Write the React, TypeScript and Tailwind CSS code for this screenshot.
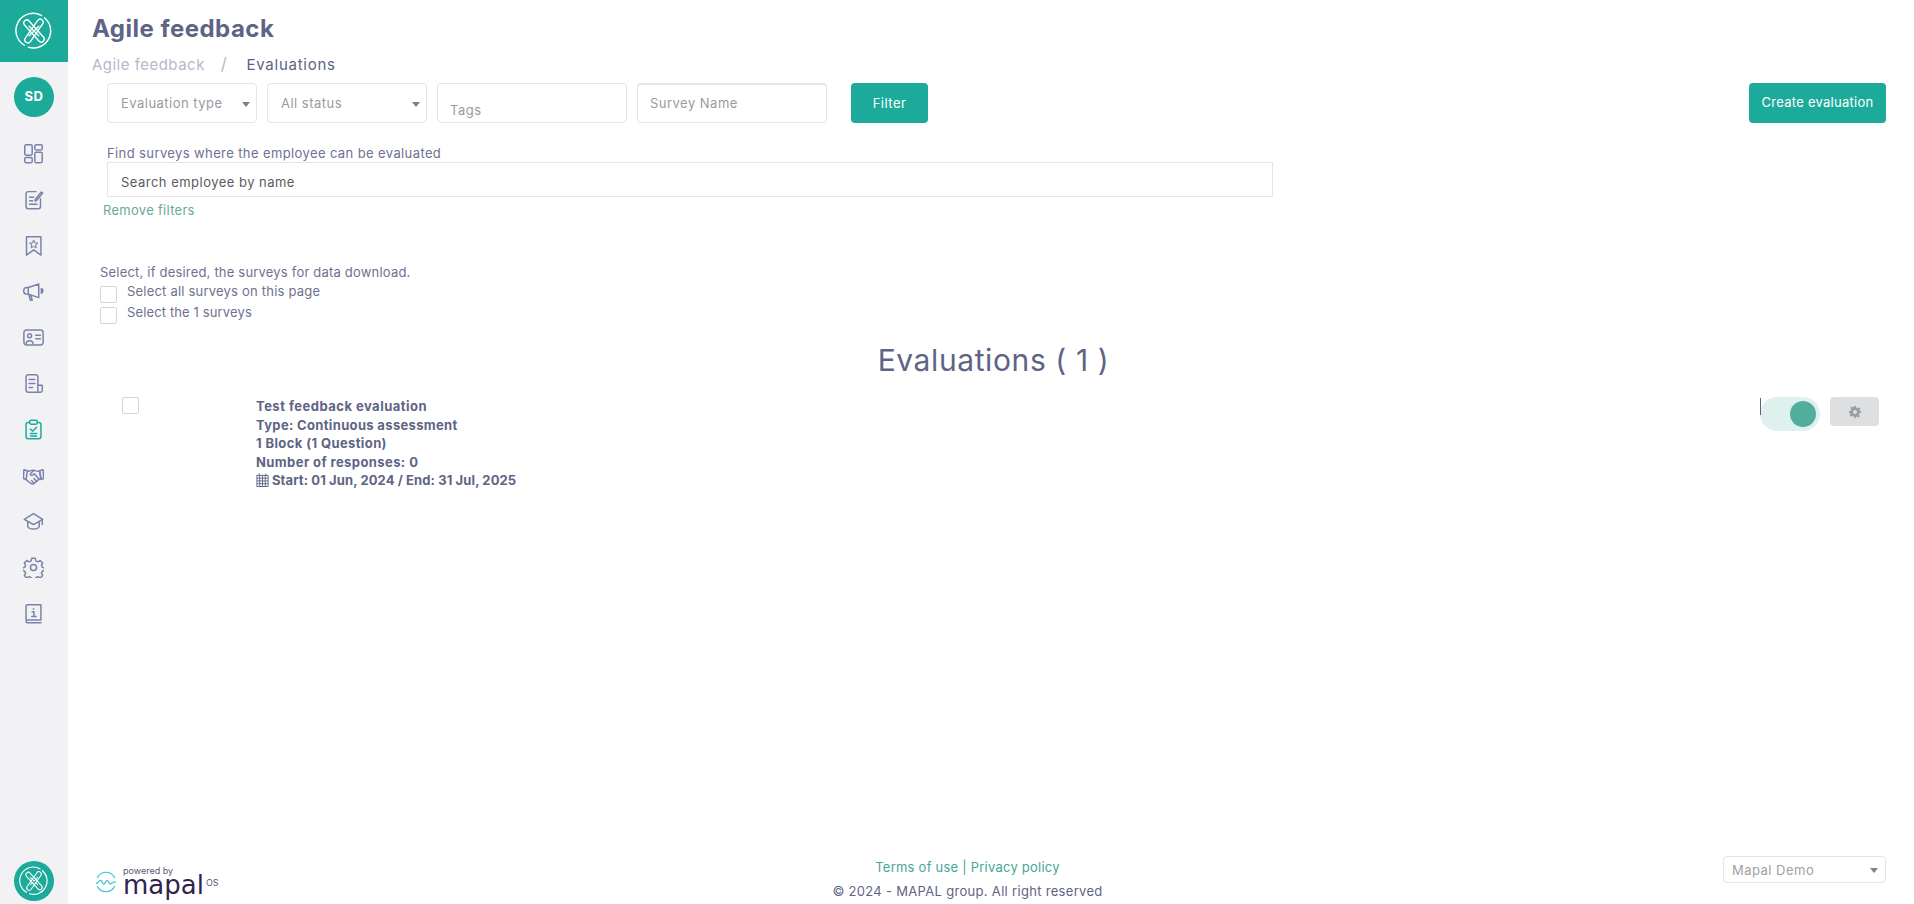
import React from "react";

const Logo = ({ size, stroke = "#ffffff" }: { size: number; stroke?: string }) => (
  <svg width={size} height={size} viewBox="0 0 40 40" fill="none" stroke={stroke} strokeWidth="1.500" strokeLinecap="round">
    <path d="M10 35A18 18 0 0 1 28 3.800" />
    <path d="M31 6A18 18 0 0 1 14 37" />
    <g strokeWidth="1.400">
      <rect x="16.800" y="5.500" width="6.400" height="29" rx="3.200" transform="rotate(35 20 20)" />
      <rect x="16.800" y="5.500" width="6.400" height="29" rx="3.200" transform="rotate(-42 20 20)" />
      <path d="M15 15l10 10M15 25l10-10" />
    </g>
  </svg>
);

const I = ({ children, color = "#7a82aa" }: { children: React.ReactNode; color?: string }) => (
  <svg width="21" height="21" viewBox="0 0 24 24" fill="none" stroke={color} strokeWidth="1.700" strokeLinecap="round" strokeLinejoin="round">
    {children}
  </svg>
);

const icons: React.ReactNode[] = [
  <I key="a"><rect x="2" y="2" width="8.500" height="12" rx="1.600" /><rect x="13.500" y="2" width="8.500" height="6" rx="1.600" /><rect x="2" y="16.500" width="8.500" height="6" rx="1.600" /><rect x="13.500" y="10.500" width="8.500" height="12" rx="1.600" /></I>,
  <I key="b"><path d="M15 3H6a2.500 2.500 0 0 0-2.500 2.500V20A2.500 2.500 0 0 0 6 22.500h11.500A2.500 2.500 0 0 0 20 20V11" /><path d="M14 12l7-8.500 1.500 1.200L15.500 13.200 13.800 13.800z" /><path d="M7.500 9.500H12M7.500 13.500H11M7.500 17.500H16" /></I>,
  <I key="c"><path d="M4 2h16.500v21l-8.250-6L4 23z" /><path d="M12.250 6l1.400 2.900 3.100.4-2.300 2.100.6 3.100-2.800-1.500-2.800 1.500.6-3.100-2.300-2.100 3.100-.4z" strokeWidth="1.200" /></I>,
  <I key="d"><path d="M18 3.500v15.500l-12-4H4.500a3.500 3.500 0 0 1 0-7.500H6z" /><path d="M6.500 15l2 7h2L9 16" /><path d="M21 8.500a3 3 0 0 1 0 5.500z" fill="#7a82aa" /><path d="M6 7.500V15" /></I>,
  <I key="e"><rect x="1" y="3.500" width="22" height="17" rx="3" /><circle cx="7.500" cy="10" r="2.300" /><path d="M3.500 19.500c0-2.500 1.500-3.800 4-3.800s4 1.300 4 3.800" /><path d="M14.500 9.500H20M14.500 13.500H20" /></I>,
  <I key="f"><path d="M17 14V4.500A2.500 2.500 0 0 0 14.500 2H6a2.500 2.500 0 0 0-2.500 2.500V19.500A2.500 2.500 0 0 0 6 22h14a2 2 0 0 0 2-2v-6z" /><path d="M17 14v8" /><path d="M7 7.500h6.500M7 12h6.500M7 16.500h4" /></I>,
  <I key="g" color="#1cab9b"><path d="M7.500 4H6a2.500 2.500 0 0 0-2.500 2.500V20A2.500 2.500 0 0 0 6 22.500h12a2.500 2.500 0 0 0 2.500-2.500V6.500A2.500 2.500 0 0 0 18 4h-1.500" /><rect x="7.500" y="1.500" width="9" height="4.500" rx="2" /><path d="M8.500 11.500l2.500 2.500 4.500-4.500" /><path d="M8.500 16.500h7M8.500 19.500h7" /></I>,
  <I key="h"><path d="M1 5.500l4 1-1.500 10-3-1zM23 5.500l-4 1 1.500 10 3-1z" /><path d="M5 7c3 .5 4.500-1.500 7-1 2 .4 4.500 1.700 7 1l1.500 8.500-3 1.500-5.500 4.500c-1.500 1-3-.5-4.500-1.500l-4-3.500" /><path d="M12 6.500l-3.500 3.500c-.8 1.500 1.500 2.500 3 1.200l1.500-1.200 5 6M15 18l-2.500-2.500M12 20l-2-2" /></I>,
  <I key="i"><path d="M12 3L1.500 9.500 12 15.500l10.500-6z" /><path d="M5.500 12v6c2 3.500 11 3.500 13 0v-6" /><path d="M22 9.500v6" /></I>,
  <I key="j"><path d="M10 1.500h4l.7 3 2.300 1 2.700-1.500 2.800 2.800-1.500 2.700 1 2.300 2.500.7v3l-2.500.7-1 2.300 1.500 2.700-2.800 2.800-2.700-1.500-2.300 1-.7 3h-4l-.7-3-2.300-1-2.700 1.500-2.800-2.800 1.500-2.700-1-2.300-2.500-.7v-3l2.500-.7 1-2.300-1.500-2.700 2.800-2.800 2.700 1.500 2.300-1z" /><circle cx="12" cy="12" r="3.500" /></I>,
  <I key="k"><path d="M3.500 19.500V3.500A1.500 1.500 0 0 1 5 2h15.500v17.500H5a1.500 1.500 0 0 0-1.500 1.500v0a1.500 1.500 0 0 0 1.500 1.500h15.500" /><path d="M12 6.500v.5M10.500 10H12.500V15M10 15.500h5" /></I>,
];

const Caret = () => <span className="w-0 h-0 border-x-[4.5px] border-x-transparent border-t-[5px] border-t-[#808080]" />;

const Check = ({ cls }: { cls: string }) => <span className={`block w-[17px] h-[17px] shrink-0 border border-[#d4d4d8] rounded-[2px] bg-white ${cls}`} />;

const field = "h-10 border border-[#e4e4ea] rounded-[4px] bg-white text-[13px] text-[#9a9a9f] flex items-center";

export default function App() {
  return (
    <div className="h-[904px] w-[1914px] flex bg-white overflow-hidden tracking-[0.03em]" style={{ fontFamily: "Inter, 'Noto Sans', sans-serif" }}>
      <aside className="w-[68px] shrink-0 bg-[#f2f2f5] flex flex-col items-center">
        <div className="w-full h-[62px] bg-[#1cab9b] flex items-center justify-center">
          <Logo size={38} />
        </div>
        <div className="mt-[15px] w-10 h-10 rounded-full bg-[#1cab9b] text-white font-bold text-[13px] flex items-center justify-center">SD</div>
        <nav className="mt-[26px] pr-[2px] flex flex-col items-center gap-[25px]">
          {icons.map((ic, i) => <div key={i} className="w-[21px] h-[21px]">{ic}</div>)}
        </nav>
        <div className="mt-auto mb-[3px] w-10 h-10 rounded-full bg-[#1cab9b] flex items-center justify-center">
          <Logo size={30} />
        </div>
      </aside>

      <main className="flex-1 min-w-0 flex flex-col">
        <h1 className="ml-[24px] mt-[14px] text-[24px] leading-[30px] font-bold text-[#5e6484]">Agile feedback</h1>
        <div className="ml-[24px] mt-[11px] h-[20px] flex items-center text-[15px]">
          <span className="text-[#b5b8cb]">Agile feedback</span>
          <span className="text-[#b5b8cb] text-[17px] ml-[16px] mr-[19px]">/</span>
          <span className="text-[#5e6484] tracking-[0.05em]">Evaluations</span>
        </div>

        <div className="mt-[8px] ml-[39px] mr-[28px] flex items-start">
          <div className={`${field} w-[150px] pl-[13px] pr-[6px] pt-[2px] justify-between`}><span>Evaluation type</span><Caret /></div>
          <div className={`${field} ml-[10px] w-[160px] pl-[13px] pr-[6px] pt-[2px] justify-between`}><span>All status</span><Caret /></div>
          <div className={`${field} ml-[10px] w-[190px] px-[12px] !items-end pb-[2px] text-[#a09a96]`}>Tags</div>
          <div className={`${field} ml-[10px] w-[190px] px-[12px] border-t-2 pt-[1px]`}>Survey Name</div>
          <button className="ml-[24px] w-[77px] h-10 rounded-[4px] bg-[#1cab9b] text-white text-[13px] pt-[1px]">Filter</button>
          <button className="ml-auto w-[137px] h-10 rounded-[4px] bg-[#1cab9b] text-white text-[13px] tracking-[0.02em]">Create evaluation</button>
        </div>

        <div className="ml-[39px] mt-[21px] text-[13px] leading-[18px] text-[#6d7190] tracking-[0.03em]">Find surveys where the employee can be evaluated</div>
        <div className="ml-[39px] w-[1166px] h-[35px] border border-[#e4e4ea] px-[13px] pt-[6px] flex items-center text-[13px] text-[#5b5b60]">Search employee by name</div>
        <div className="ml-[35px] mt-[4px] text-[13px] leading-[18px] text-[#6aa99b] tracking-[0.022em]">Remove filters</div>

        <div className="ml-[32px] mt-[44px] text-[13px] leading-[18px] text-[#6d7190] tracking-[0.015em]">Select, if desired, the surveys for data download.</div>
        <div className="ml-[32px] mt-[1px] flex items-start h-[21px]"><Check cls="mt-[4px]" /><span className="ml-[10px] text-[13px] leading-[18px] text-[#6d7190] tracking-[0.016em]">Select all surveys on this page</span></div>
        <div className="ml-[32px] flex items-start h-[21px]"><Check cls="mt-[4px]" /><span className="ml-[10px] text-[13px] leading-[18px] text-[#6d7190] tracking-[0.01em]">Select the 1 surveys</span></div>

        <h2 className="mt-[16px] text-center text-[30px] leading-[40px] font-normal text-[#5e6484] pl-[5px] tracking-[0.02em]">Evaluations ( 1 )</h2>

        <div className="mt-[17px] flex items-start">
          <Check cls="ml-[54px]" />
          <div className="ml-[117px] text-[13px] leading-[18.5px] font-bold text-[#5e6484]">
            <div>Test feedback evaluation</div>
            <div className="tracking-[0.026em]">Type: Continuous assessment</div>
            <div className="tracking-[0.03em]">1 Block (1 Question)</div>
            <div className="tracking-[0.032em]">Number of responses: 0</div>
            <div className="flex items-center gap-[3px] tracking-[0.008em]">
              <svg width="13" height="14" viewBox="0 0 14 15" fill="none" stroke="#5e6484" strokeWidth="1">
                <rect x="1" y="2.500" width="12" height="12" />
                <path d="M1 5.500h12M1 8.500h12M1 11.500h12M4 2.500v12M7 2.500v12M10 2.500v12M3.500.5v2.500M10.500.5v2.500" />
              </svg>
              <span>Start: 01 Jun, 2024 / End: 31 Jul, 2025</span>
            </div>
          </div>
          <div className="ml-auto mr-[35px] flex items-start">
            <span className="relative z-10 w-px h-[17px] bg-[#5e6484] mt-[1px]" />
            <div className="ml-[-1px] w-[60px] h-[34px] rounded-full bg-[#dff1ee] flex items-center justify-end pr-[4px]">
              <span className="block w-[26px] h-[26px] rounded-full bg-[#52ad9c]" />
            </div>
            <div className="ml-[10px] w-[49px] h-[29px] rounded-[4px] bg-[#dedfe1] flex items-center justify-center">
              <svg width="12" height="12" viewBox="0 0 24 24" fill="#9a9ca6">
                <path fillRule="evenodd" d="M10 0h4l.7 3.400 2.500 1 2.900-1.900 2.800 2.800-1.900 2.900 1 2.500L24 10v4l-3.400.7-1 2.500 1.900 2.900-2.800 2.800-2.900-1.900-2.500 1L14 24h-4l-.7-3.400-2.500-1-2.900 1.900-2.800-2.800 1.900-2.900-1-2.500L0 14v-4l3.400-.7 1-2.500L2.500 3.900l2.800-2.800 2.900 1.900 1.100-1zM12 8a4 4 0 1 0 0 8 4 4 0 0 0 0-8z" />
              </svg>
            </div>
          </div>
        </div>

        <footer className="mt-auto mb-[4px] flex items-end">
          <div className="ml-[27px] mb-[6px] flex items-end w-[140px]">
            <svg className="mb-[1px]" width="22" height="22" viewBox="0 0 22 22" fill="none" stroke="#3cc0d0" strokeWidth="1.200" strokeLinecap="round">
              <path d="M2.500 6.500A9.500 9.500 0 0 1 19.500 6.500M2.500 15.500A9.500 9.500 0 0 0 19.500 15.500" />
              <path d="M1.500 12.500c2-1 3-4 4.500-3s1.500 4 3 3.500 2-4 3.500-3.500 1.500 4 3 3.500 3-2.500 5-2" />
            </svg>
            <div className="ml-[6px] flex flex-col leading-none text-[#2f2450]">
              <span className="text-[9px] leading-[10px] tracking-normal text-[#5b5470]">powered by</span>
              <span className="flex items-start">
                <span className="text-[26px] leading-[18px] tracking-normal" style={{ fontFamily: "'DejaVu Sans', sans-serif" }}>mapal</span>
                <span className="text-[9px] leading-[10px] ml-[2px] mt-[2px] tracking-normal text-[#5b5470]">OS</span>
              </span>
            </div>
          </div>
          <div className="flex-1 flex flex-col items-center text-[13px] pr-[23px]">
            <div className="leading-[18px] text-[#45a795] tracking-[0.018em]">Terms of use | Privacy policy</div>
            <div className="mt-[6px] leading-[18px] text-[#5e6484] tracking-[0.024em]">© 2024 - MAPAL group. All right reserved</div>
          </div>
          <div className="mr-[28px] mb-[17px] w-[163px] h-[27px] border border-[#e4e4ea] rounded-[4px] flex items-center justify-between pl-[8px] pr-[7px] pt-[2px] text-[13px] text-[#a0a0a5]">
            <span>Mapal Demo</span><Caret />
          </div>
        </footer>
      </main>
    </div>
  );
}
